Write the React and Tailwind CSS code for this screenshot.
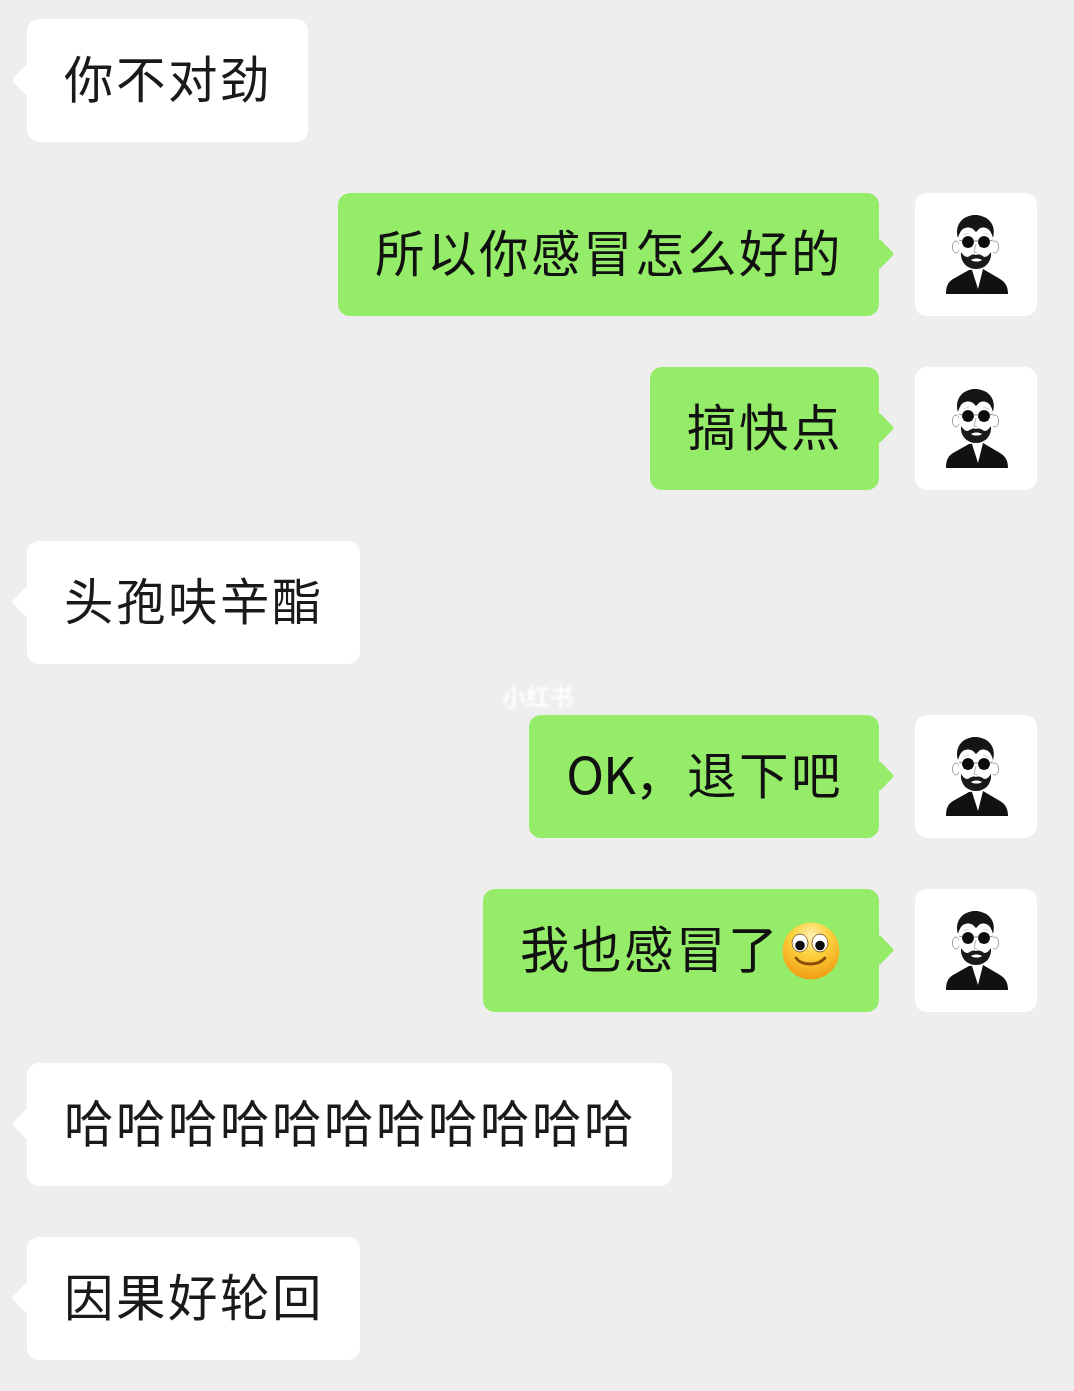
import React from 'react'

const cjk = { fontFamily: '"Noto Sans CJK SC", "Noto Sans", sans-serif' }

const Avatar = () => (
  <div className="w-[122px] h-[123px] shrink-0 bg-white rounded-[12px] flex items-center justify-center">
    <svg width="122" height="122" viewBox="0 0 122 122">
      {/* shoulders */}
      <path d="M31 100 C31 92 33 88 38 85 L54 76 L68 75 L85 85 C90 88 93 92 93 100 Z" fill="#111" />
      <path d="M57 76 L63 95 L68 75 L62 72 Z" fill="#fff" />
      {/* ears + face */}
      <ellipse cx="41" cy="53" rx="3.6" ry="6" fill="#fff" stroke="#888" strokeWidth="0.8" />
      <ellipse cx="80" cy="53" rx="3.6" ry="6" fill="#fff" stroke="#888" strokeWidth="0.8" />
      <path d="M44 38 L78 38 L78 58 C78 68 70 76 61 76 C52 76 44 68 44 58 Z" fill="#fff" />
      {/* hair */}
      <path d="M43 44 C39 30 49 21 60 21 C72 21 82 30 78 44 C77 41 76 37 73 35 C70 33 66 33 64 35 L61 38 L58 35 C55 33 51 33 48 35 C45 37 44 41 43 44 Z" fill="#151515" />
      {/* beard */}
      <path d="M46 58 C48 61 50 63 53 63 C56 61 58 60 61 61 C64 60 67 61 69 63 C72 63 74 61 76 58 C77 67 71 75 61 75 C51 75 45 67 46 58 Z" fill="#1a1a1a" />
      <path d="M56 66 C59 64 64 64 67 66 C64 68 59 68 56 66 Z" fill="#fff" />
      {/* brows + nose */}
      <path d="M48 41 L54 39 M68 39 L74 41" stroke="#ccc" strokeWidth="0.8" fill="none" />
      <path d="M61 50 L59 58 L62 59" stroke="#999" strokeWidth="0.8" fill="none" />
      {/* glasses */}
      <circle cx="53" cy="48" r="6" fill="#0b0b0b" />
      <circle cx="69" cy="48" r="6" fill="#0b0b0b" />
      <path d="M58 47 L64 47 M47 47 L44 46 M75 47 L78 46" stroke="#666" strokeWidth="0.8" />
    </svg>
  </div>
)

const Smiley = () => (
  <svg width="58" height="58" viewBox="0 0 58 58" className="ml-[2px] mr-[3px] shrink-0">
    <defs>
      <radialGradient id="face" cx="50%" cy="25%" r="80%">
        <stop offset="0%" stopColor="#fff0b8" />
        <stop offset="40%" stopColor="#fdd23f" />
        <stop offset="100%" stopColor="#ee960c" />
      </radialGradient>
    </defs>
    <circle cx="29" cy="29" r="28.5" fill="url(#face)" />
    <ellipse cx="18" cy="21" rx="8" ry="9" fill="#fff" stroke="#8a6a2c" strokeWidth="1" />
    <ellipse cx="38" cy="21" rx="8" ry="9" fill="#fff" stroke="#8a6a2c" strokeWidth="1" />
    <circle cx="18" cy="23.5" r="4.8" fill="#0c0c0c" />
    <circle cx="38" cy="23.5" r="4.8" fill="#0c0c0c" />
    <path d="M14 36 C20 44 36 44 43 36" fill="none" stroke="#8a4a08" strokeWidth="2.8" strokeLinecap="round" />
  </svg>
)

const LeftRow = ({ text }) => (
  <div className="flex justify-start pl-[27px]">
    <div className="relative bg-white rounded-[12px] h-[123px] pl-[37px] pr-[36px] flex items-center text-[49.5px] tracking-[2.5px] leading-none text-[#1a1a1a] whitespace-nowrap">
      <span className="absolute left-[-11px] top-[50px] w-[22px] h-[22px] bg-white rotate-45 rounded-[3px]" />
      <span className="relative top-[-4px]">{text}</span>
    </div>
  </div>
)

const RightRow = ({ text, children }) => (
  <div className="flex justify-end items-center gap-[36px] pr-[37px]">
    <div className="relative bg-[#95ec69] rounded-[12px] h-[123px] pl-[37px] pr-[36px] flex items-center text-[49.5px] tracking-[2.5px] leading-none text-[#111] whitespace-nowrap">
      <span className="absolute right-[-11px] top-[50px] w-[22px] h-[22px] bg-[#95ec69] rotate-45 rounded-[3px]" />
      <span className="relative top-[-4px]">{text}</span>
      {children}
    </div>
    <Avatar />
  </div>
)

export default function App() {
  return (
    <div className="relative w-[1074px] h-[1391px] overflow-hidden bg-[#eeeeee] pt-[19px] flex flex-col gap-[51px]" style={cjk}>
      <LeftRow text="你不对劲" />
      <RightRow text="所以你感冒怎么好的" />
      <RightRow text="搞快点" />
      <LeftRow text="头孢呋辛酯" />
      <RightRow text={<><span className="text-[51px] tracking-[-1px]">OK</span>，退下吧</>} />
      <RightRow text="我也感冒了">
        <Smiley />
      </RightRow>
      <LeftRow text="哈哈哈哈哈哈哈哈哈哈哈" />
      <LeftRow text="因果好轮回" />
      {/* watermark */}
      <span className="absolute left-[502px] top-[680px] text-[24px] leading-[32px] font-bold text-white opacity-90 blur-[1px]">小红书</span>
    </div>
  )
}
